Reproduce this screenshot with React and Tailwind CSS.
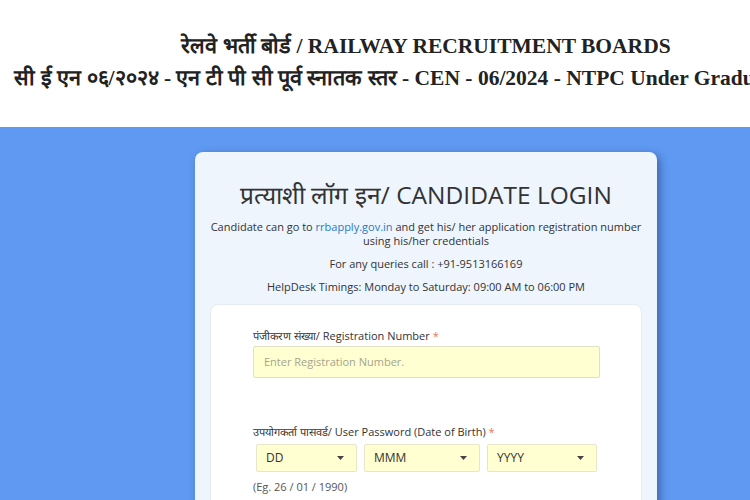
import React from 'react'

const Caret = () => (
    <svg width="7" height="4" viewBox="0 0 7 4" className="shrink-0">
        <path d="M0 0 L7 0 L3.5 4 Z" fill="#444" />
    </svg>
);

function DobSelect({ label, width }) {
    return (
        <div className={`${width} h-[28px] flex items-center justify-between pl-[9px] pr-[12px] bg-[#ffffd1] border border-[#e6e6c8] rounded-[2px] text-[12px] text-[#333]`}>
            <span>{label}</span>
            <Caret />
        </div>
    );
}

export default function App() {
    return (
        <div className="w-[750px] h-[500px] overflow-hidden bg-white">
            <div className="w-[852px] flex flex-col">
                <header className="bg-white h-[127px] pt-[30px] flex flex-col items-center font-['Liberation_Serif',serif] font-bold text-[21.5px] text-[#222] leading-[32px] whitespace-nowrap">
                    <div>रेलवे भर्ती बोर्ड / RAILWAY RECRUITMENT BOARDS</div>
                    <div>सी ई एन ०६/२०२४ - एन टी पी सी पूर्व स्नातक स्तर - CEN - 06/2024 - NTPC Under Graduate Level</div>
                </header>

                <main className="bg-[#5f99f1] h-[373px] pt-[25px] flex justify-center">
                    <div className="w-[462px] h-[400px] bg-[#eef5fd] rounded-[8px] shadow-[3px_3px_8px_rgba(20,40,90,0.45)] px-[15px] pt-[26px] font-['Open_Sans',sans-serif] text-[#333]">
                        <h1 className="text-center text-[24.5px] leading-[34px] text-[#333]">प्रत्याशी लॉग इन/ CANDIDATE LOGIN</h1>
                        <p className="mt-[8px] -mx-[4px] text-center text-[11px] leading-[14px]">
                            Candidate can go to <span className="text-[#2a78c8]">rrbapply.gov.in</span> and get his/ her application registration number using his/her credentials
                        </p>
                        <p className="mt-[9px] text-center text-[11px] leading-[14px]">For any queries call : +91-9513166169</p>
                        <p className="mt-[9px] text-center text-[11px] leading-[14px]">HelpDesk Timings: Monday to Saturday: 09:00 AM to 06:00 PM</p>

                        <div className="mt-[10px] bg-white rounded-[8px] border border-[#e4ebf3] h-[300px] pl-[42px] pr-[41px] pt-[24px]">
                            <label className="block text-[11px] leading-[14px] text-[#333]">
                                पंजीकरण संख्या/ Registration Number <span className="text-[#e8735a]">*</span>
                            </label>
                            <div className="mt-[3px] h-[32px] bg-[#ffffd1] border border-[#e0e0c4] rounded-[2px] flex items-center px-[10px] text-[11px] text-[#a5a58c]">
                                Enter Registration Number.
                            </div>

                            <label className="block mt-[47px] text-[11px] leading-[14px] text-[#333]">
                                उपयोगकर्ता पासवर्ड/ User Password (Date of Birth) <span className="text-[#e8735a]">*</span>
                            </label>
                            <div className="mt-[5px] pl-[3px] flex gap-[7px]">
                                <DobSelect label="DD" width="w-[101px]" />
                                <DobSelect label="MMM" width="w-[116px]" />
                                <DobSelect label="YYYY" width="w-[110px]" />
                            </div>
                            <div className="mt-[7px] text-[11px] text-[#555]">(Eg. 26 / 01 / 1990)</div>
                        </div>
                    </div>
                </main>
            </div>
        </div>
    )
}
